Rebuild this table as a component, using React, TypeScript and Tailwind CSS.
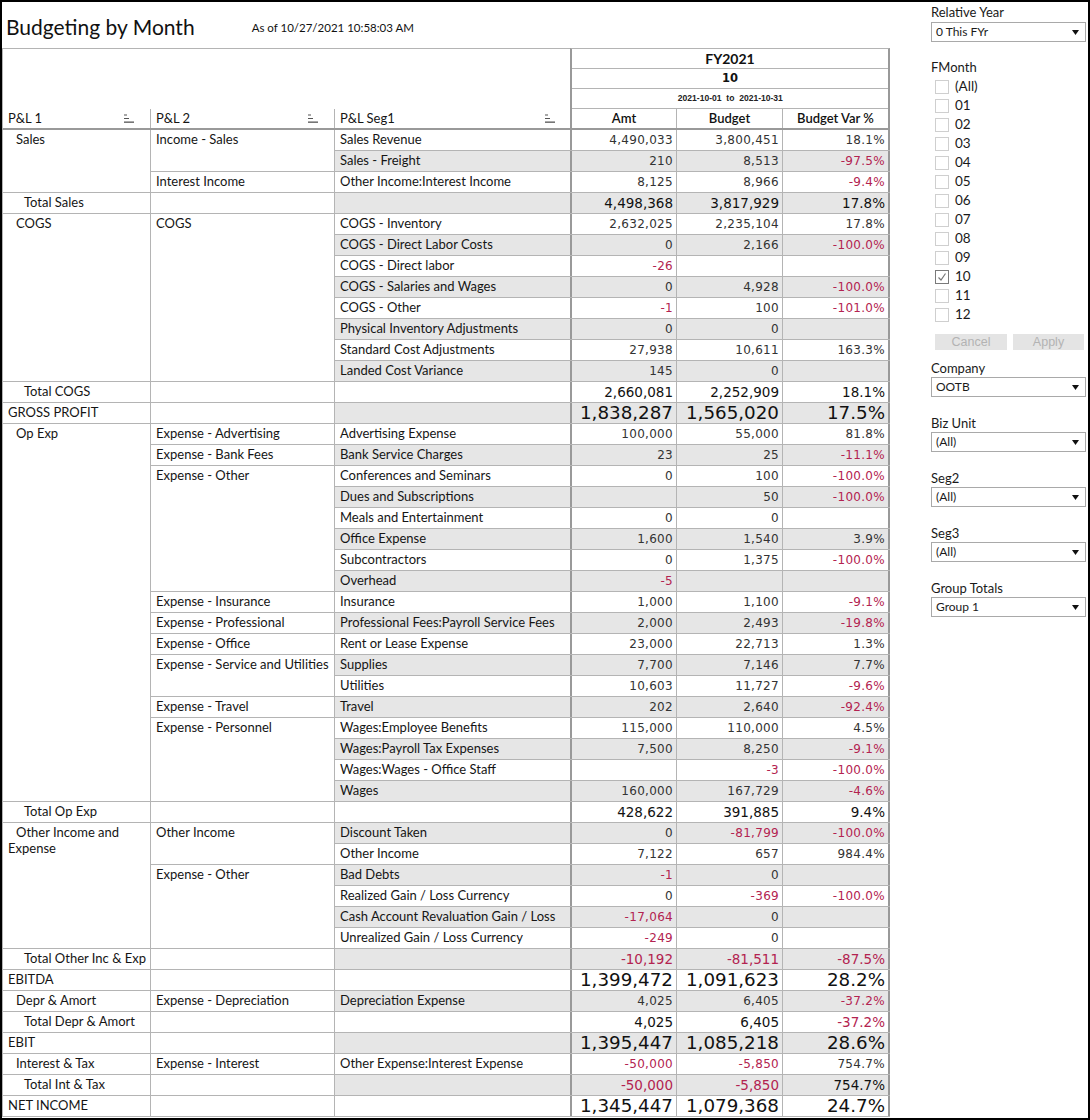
import React from "react";

type R = [string, string, string, string];
type Sub = { l: string; rows: R[] };
type G =
  | { t: "g"; l: string; subs: Sub[] }
  | { t: "tot"; l: string; v: [string, string, string]; grand?: boolean };

const data: G[] = [
  {
    t: "g",
    l: "Sales",
    subs: [
      {
        l: "Income - Sales",
        rows: [
          ["Sales Revenue", "4,490,033", "3,800,451", "18.1%"],
          ["Sales - Freight", "210", "8,513", "-97.5%"],
        ],
      },
      { l: "Interest Income", rows: [["Other Income:Interest Income", "8,125", "8,966", "-9.4%"]] },
    ],
  },
  { t: "tot", l: "Total Sales", v: ["4,498,368", "3,817,929", "17.8%"] },
  {
    t: "g",
    l: "COGS",
    subs: [
      {
        l: "COGS",
        rows: [
          ["COGS - Inventory", "2,632,025", "2,235,104", "17.8%"],
          ["COGS - Direct Labor Costs", "0", "2,166", "-100.0%"],
          ["COGS - Direct labor", "-26", "", ""],
          ["COGS - Salaries and Wages", "0", "4,928", "-100.0%"],
          ["COGS - Other", "-1", "100", "-101.0%"],
          ["Physical Inventory Adjustments", "0", "0", ""],
          ["Standard Cost Adjustments", "27,938", "10,611", "163.3%"],
          ["Landed Cost Variance", "145", "0", ""],
        ],
      },
    ],
  },
  { t: "tot", l: "Total COGS", v: ["2,660,081", "2,252,909", "18.1%"] },
  { t: "tot", l: "GROSS PROFIT", v: ["1,838,287", "1,565,020", "17.5%"], grand: true },
  {
    t: "g",
    l: "Op Exp",
    subs: [
      { l: "Expense - Advertising", rows: [["Advertising Expense", "100,000", "55,000", "81.8%"]] },
      { l: "Expense - Bank Fees", rows: [["Bank Service Charges", "23", "25", "-11.1%"]] },
      {
        l: "Expense - Other",
        rows: [
          ["Conferences and Seminars", "0", "100", "-100.0%"],
          ["Dues and Subscriptions", "", "50", "-100.0%"],
          ["Meals and Entertainment", "0", "0", ""],
          ["Office Expense", "1,600", "1,540", "3.9%"],
          ["Subcontractors", "0", "1,375", "-100.0%"],
          ["Overhead", "-5", "", ""],
        ],
      },
      { l: "Expense - Insurance", rows: [["Insurance", "1,000", "1,100", "-9.1%"]] },
      {
        l: "Expense - Professional",
        rows: [["Professional Fees:Payroll Service Fees", "2,000", "2,493", "-19.8%"]],
      },
      { l: "Expense - Office", rows: [["Rent or Lease Expense", "23,000", "22,713", "1.3%"]] },
      {
        l: "Expense - Service and Utilities",
        rows: [
          ["Supplies", "7,700", "7,146", "7.7%"],
          ["Utilities", "10,603", "11,727", "-9.6%"],
        ],
      },
      { l: "Expense - Travel", rows: [["Travel", "202", "2,640", "-92.4%"]] },
      {
        l: "Expense - Personnel",
        rows: [
          ["Wages:Employee Benefits", "115,000", "110,000", "4.5%"],
          ["Wages:Payroll Tax Expenses", "7,500", "8,250", "-9.1%"],
          ["Wages:Wages - Office Staff", "", "-3", "-100.0%"],
          ["Wages", "160,000", "167,729", "-4.6%"],
        ],
      },
    ],
  },
  { t: "tot", l: "Total Op Exp", v: ["428,622", "391,885", "9.4%"] },
  {
    t: "g",
    l: "Other Income and Expense",
    subs: [
      {
        l: "Other Income",
        rows: [
          ["Discount Taken", "0", "-81,799", "-100.0%"],
          ["Other Income", "7,122", "657", "984.4%"],
        ],
      },
      {
        l: "Expense - Other",
        rows: [
          ["Bad Debts", "-1", "0", ""],
          ["Realized Gain / Loss Currency", "0", "-369", "-100.0%"],
          ["Cash Account Revaluation Gain / Loss", "-17,064", "0", ""],
          ["Unrealized Gain / Loss Currency", "-249", "0", ""],
        ],
      },
    ],
  },
  { t: "tot", l: "Total Other Inc & Exp", v: ["-10,192", "-81,511", "-87.5%"] },
  { t: "tot", l: "EBITDA", v: ["1,399,472", "1,091,623", "28.2%"], grand: true },
  {
    t: "g",
    l: "Depr & Amort",
    subs: [{ l: "Expense - Depreciation", rows: [["Depreciation Expense", "4,025", "6,405", "-37.2%"]] }],
  },
  { t: "tot", l: "Total Depr & Amort", v: ["4,025", "6,405", "-37.2%"] },
  { t: "tot", l: "EBIT", v: ["1,395,447", "1,085,218", "28.6%"], grand: true },
  {
    t: "g",
    l: "Interest & Tax",
    subs: [
      {
        l: "Expense - Interest",
        rows: [["Other Expense:Interest Expense", "-50,000", "-5,850", "754.7%"]],
      },
    ],
  },
  { t: "tot", l: "Total Int & Tax", v: ["-50,000", "-5,850", "754.7%"] },
  { t: "tot", l: "NET INCOME", v: ["1,345,447", "1,079,368", "24.7%"], grand: true },
];

const LBL = "font-['Lato','Noto_Sans',sans-serif] text-[13px] text-[#151515]";
const NUMF = "font-['DejaVu_Sans','Verdana',sans-serif]";

function Nums({ v, kind }: { v: string[]; kind: "n" | "t" | "g" }) {
  const size =
    kind === "n"
      ? "text-[12px] tracking-[0.3px]"
      : kind === "t"
      ? "text-[13.5px]"
      : "text-[18.3px]";
  const widths = [
    "w-[105px] border-r border-[#b4b4b4]",
    "w-[106px] border-r border-[#b4b4b4]",
    "w-[107px] border-r-2 border-[#999999]",
  ];
  return (
    <>
      {v.map((x, i) => {
        const neg = x.startsWith("-");
        const col = neg ? "text-[#b32350]" : kind === "n" ? "text-[#333]" : "text-[#111]";
        return (
          <div
            key={i}
            className={`${widths[i]} ${NUMF} ${size} ${col} text-right pr-[3px] leading-[20px] whitespace-nowrap overflow-hidden`}
          >
            {x}
          </div>
        );
      })}
    </>
  );
}

function SortIcon() {
  return (
    <svg width="10" height="9" viewBox="0 0 10 9" className="shrink-0">
      <rect x="0" y="0.5" width="3" height="1" fill="#555" />
      <rect x="0" y="4" width="5" height="1" fill="#555" />
      <rect x="0" y="7.5" width="10" height="1.3" fill="#555" />
    </svg>
  );
}

function Caret() {
  return (
    <svg width="7" height="5" viewBox="0 0 7 5">
      <path d="M0 0 L7 0 L3.5 5 Z" fill="#111" />
    </svg>
  );
}

function Dropdown({ value }: { value: string }) {
  return (
    <div className="w-[155px] h-[20px] border border-[#a9a9a9] bg-white flex items-center justify-between pl-[4px] pr-[6px]">
      <span className="font-['Lato',sans-serif] text-[12px] text-[#1a1a1a] leading-none">{value}</span>
      <Caret />
    </div>
  );
}

function Label({ children }: { children: React.ReactNode }) {
  return (
    <div className="font-['Lato',sans-serif] text-[13px] text-[#1a1a1a] leading-[16px] h-[16px]">{children}</div>
  );
}

export default function App() {
  let idx = 0;
  const band = () => {
    const i = idx++;
    return i % 2 === 1 ? "bg-[#e6e6e6]" : "bg-white";
  };

  const months = ["(All)", "01", "02", "03", "04", "05", "06", "07", "08", "09", "10", "11", "12"];

  return (
    <div className="w-[1090px] h-[1120px] border-2 border-black bg-white flex overflow-hidden">
      {/* Left: title + table */}
      <div className="w-[918px] flex flex-col">
        <div className="h-[46px] flex items-center gap-[57px] pl-[4px] pt-[2px]">
          <div className="font-['Lato',sans-serif] text-[21px] text-[#111] leading-none">Budgeting by Month</div>
          <div className="font-['Lato',sans-serif] text-[11.5px] text-[#111] leading-none pt-[4px]">
            As of 10/27/2021 10:58:03 AM
          </div>
        </div>

        {/* Header */}
        <div className="flex">
          <div className="w-[568px] h-[82px] border-l border-t border-b-2 border-[#b4b4b4] border-b-[#999999] flex flex-col">
            <div className="h-[60px]" />
            <div className={`h-[19px] flex ${LBL}`}>
              <div className="w-[148px] border-r border-[#b4b4b4] flex items-center justify-between pl-[5px] pr-[16px]">
                <span>P&amp;L 1</span>
                <SortIcon />
              </div>
              <div className="w-[184px] border-r border-[#b4b4b4] flex items-center justify-between pl-[5px] pr-[16px]">
                <span>P&amp;L 2</span>
                <SortIcon />
              </div>
              <div className="flex-1 flex items-center justify-between pl-[5px] pr-[15px]">
                <span>P&amp;L Seg1</span>
                <SortIcon />
              </div>
            </div>
          </div>
          <div className="w-[320px] h-[82px] border-l-2 border-r-2 border-t border-b-2 border-[#999999] border-t-[#b4b4b4] flex flex-col">
            <div className="h-[20px] border-b border-[#b4b4b4] flex items-center justify-center font-['Lato',sans-serif] font-bold text-[14px] text-[#111]">
              FY2021
            </div>
            <div className="h-[20px] border-b border-[#b4b4b4] flex items-center justify-center font-['DejaVu_Sans',sans-serif] font-bold text-[11.5px] text-[#111]">
              10
            </div>
            <div className="h-[20px] border-b border-[#b4b4b4] flex items-center justify-center">
              <span className="inline-block scale-x-90 font-['Liberation_Sans',sans-serif] font-bold text-[9.5px] text-[#222] whitespace-nowrap">
                2021-10-01&nbsp;&nbsp;to&nbsp;&nbsp;2021-10-31
              </span>
            </div>
            <div className="h-[19px] flex font-['Lato',sans-serif] font-semibold text-[13px] text-[#111]">
              <div className="w-[105px] border-r border-[#b4b4b4] flex items-center justify-center">Amt</div>
              <div className="w-[106px] border-r border-[#b4b4b4] flex items-center justify-center">Budget</div>
              <div className="flex-1 flex items-center justify-center">Budget Var %</div>
            </div>
          </div>
        </div>

        {/* Body */}
        <div className={`w-[888px] border-l border-[#b4b4b4] ${LBL}`}>
          {data.map((g, gi) => {
            if (g.t === "tot") {
              const b = band();
              return (
                <div key={gi} className="flex h-[21px]">
                  <div
                    className={`w-[148px] border-r border-b border-[#b4b4b4] pl-[5px] leading-[19px] whitespace-nowrap ${
                      g.grand ? "indent-0" : "indent-[16px]"
                    }`}
                  >
                    {g.l}
                  </div>
                  <div className="w-[184px] border-r border-b border-[#b4b4b4]" />
                  <div className={`flex border-b border-[#b4b4b4] ${b}`}>
                    <div className="w-[237px] border-r-2 border-[#999999]" />
                    <Nums v={g.v} kind={g.grand ? "g" : "t"} />
                  </div>
                </div>
              );
            }
            return (
              <div key={gi} className="flex">
                <div className="w-[148px] border-r border-b border-[#b4b4b4] pl-[5px] pt-[1px] leading-[16px] indent-[8px]">
                  {g.l}
                </div>
                <div className="flex flex-col">
                  {g.subs.map((s, si) => (
                    <div key={si} className="flex">
                      <div className="w-[184px] border-r border-b border-[#b4b4b4] pl-[5px] pt-[1px] leading-[16px] whitespace-nowrap">
                        {s.l}
                      </div>
                      <div className="flex flex-col">
                        {s.rows.map((r, ri) => {
                          const b = band();
                          return (
                            <div key={ri} className={`flex h-[21px] border-b border-[#b4b4b4] ${b}`}>
                              <div className="w-[237px] border-r-2 border-[#999999] pl-[5px] leading-[19px] whitespace-nowrap overflow-hidden">
                                {r[0]}
                              </div>
                              <Nums v={[r[1], r[2], r[3]]} kind="n" />
                            </div>
                          );
                        })}
                      </div>
                    </div>
                  ))}
                </div>
              </div>
            );
          })}
        </div>
      </div>

      {/* Right: filters */}
      <div className="flex-1 flex flex-col pl-[11px] pt-[2px]">
        <Label>Relative Year</Label>
        <div className="mt-[2px]">
          <Dropdown value="0 This FYr" />
        </div>

        <div className="mt-[17px]">
          <Label>FMonth</Label>
        </div>
        <div className="flex flex-col mt-[2px]">
          {months.map((m) => {
            const checked = m === "10";
            return (
              <div key={m} className="h-[19px] flex items-center pl-[4px] gap-[6px]">
                <div
                  className={`w-[14px] h-[14px] border bg-white flex items-center justify-center ${
                    checked ? "border-[#7a7a7a]" : "border-[#cfcfcf]"
                  }`}
                >
                  {checked && (
                    <svg width="10" height="10" viewBox="0 0 10 10">
                      <path d="M1.5 5.5 L4 8 L8.5 1.5" stroke="#777" strokeWidth="1.2" fill="none" />
                    </svg>
                  )}
                </div>
                <span className="font-['Lato',sans-serif] text-[13.5px] text-[#1a1a1a] leading-none">{m}</span>
              </div>
            );
          })}
        </div>
        <div className="mt-[10px] flex gap-[6px] pl-[4px]">
          <div className="w-[72px] h-[16px] bg-[#e4e4e4] flex items-center justify-center font-['Liberation_Sans',sans-serif] text-[12.5px] text-[#b3b3b3]">
            Cancel
          </div>
          <div className="w-[71px] h-[16px] bg-[#e4e4e4] flex items-center justify-center font-['Liberation_Sans',sans-serif] text-[12.5px] text-[#b3b3b3]">
            Apply
          </div>
        </div>

        {[
          ["Company", "OOTB"],
          ["Biz Unit", "(All)"],
          ["Seg2", "(All)"],
          ["Seg3", "(All)"],
          ["Group Totals", "Group 1"],
        ].map(([l, v], i) => (
          <div key={l} className={i === 0 ? "mt-[10px]" : "mt-[18px]"}>
            <Label>{l}</Label>
            <div className="mt-[1px]">
              <Dropdown value={v} />
            </div>
          </div>
        ))}
      </div>
    </div>
  );
}
